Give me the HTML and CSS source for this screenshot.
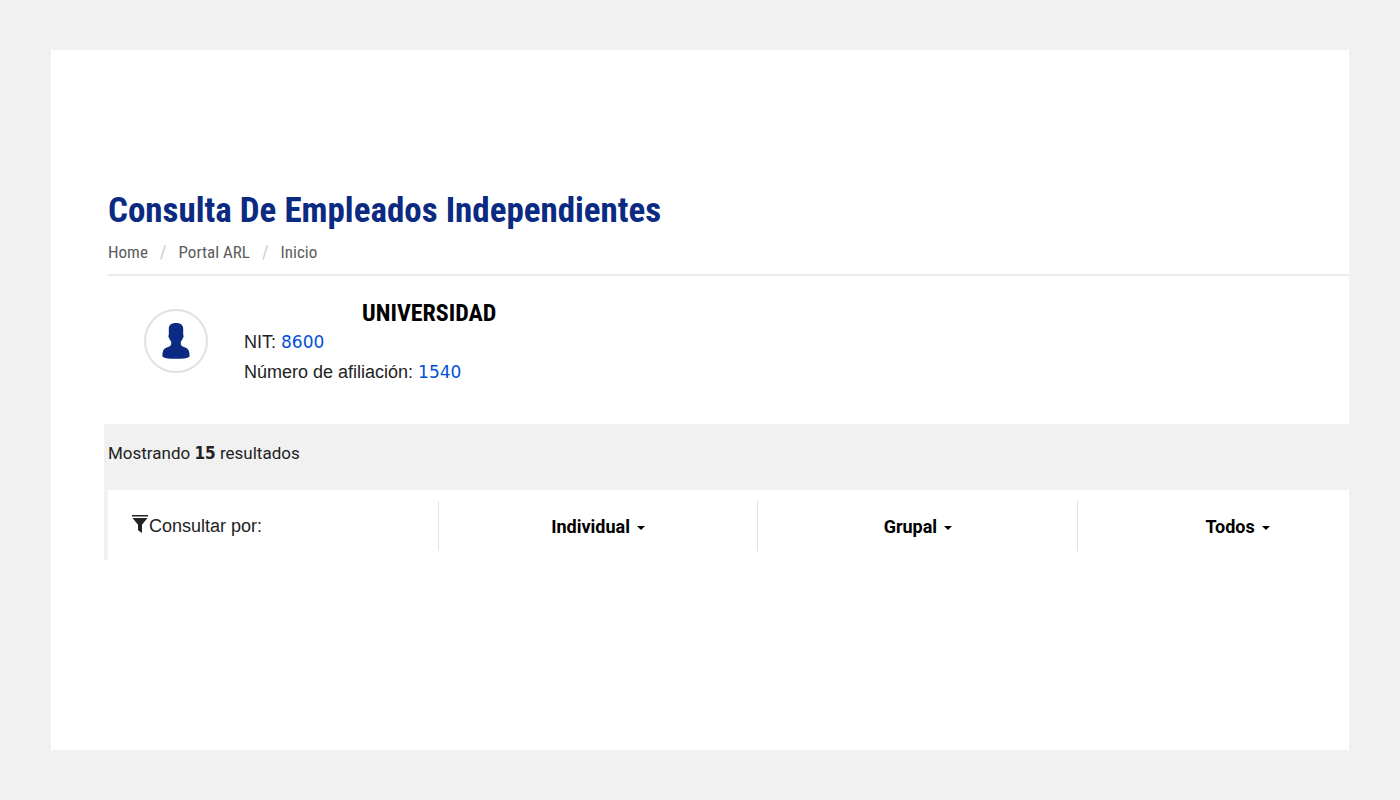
FILE: index.html
```html
<!DOCTYPE html>
<html lang="es">
<head>
<meta charset="UTF-8" />
<meta name="viewport" content="width=device-width, initial-scale=1" />
<title>Consulta De Empleados Independientes</title>
<link rel="stylesheet" href="styles.css">
</head>
<body>
<main class="page">
  <header class="page-header">
    <h1>Consulta De Empleados Independientes</h1>
    <nav>
      <ol class="breadcrumb">
        <li><a href="#">Home</a></li>
        <li><a href="#">Portal ARL</a></li>
        <li><a href="#">Inicio</a></li>
      </ol>
    </nav>
  </header>

  <section class="company">
    <div class="avatar">
      <svg viewBox="0 0 28 36" width="28" height="36">
        <path d="M14 0C9.400 0 6.800 2.200 6.800 5.500V12c-.7.600-.5 2.200.3 2.800.3 1.800 1.300 2.700 2.100 3.700v2.800c-.5 1.800-2.200 2.500-4.400 3.300C1.600 25.800.4 28 .4 33.200c0 1.600 6 2.600 13.600 2.600s13.600-1 13.600-2.600c0-5.200-1.200-7.400-4.400-8.600-2.200-.8-3.900-1.500-4.400-3.300v-2.800c.8-1 1.800-1.900 2.100-3.700.8-.6 1-2.200.3-2.800V5.500C21.200 2.200 18.600 0 14 0z" />
      </svg>
    </div>
    <div class="company-info">
      <h2>UNIVERSIDAD</h2>
      <p>NIT: <span class="number">8600</span></p>
      <p>Número de afiliación: <span class="number">1540</span></p>
    </div>
  </section>

  <section class="results">
    <p class="results-count">Mostrando <strong>15</strong> resultados</p>
    <div class="filters">
      <div class="filter-label">
        <svg viewBox="0 0 16 18" width="16" height="18">
          <path d="M0 0h16v1.500H0zM.5 3h15L10 9.800V18l-4-2.800V9.800z" />
        </svg>
        <span>Consultar por:</span>
      </div>
      <button class="filter" type="button">Individual</button>
      <button class="filter" type="button">Grupal</button>
      <button class="filter" type="button">Todos</button>
    </div>
  </section>
</main>
</body>
</html>
```
FILE: styles.css
```css
/* Reset */
* {
  margin: 0;
  padding: 0;
  box-sizing: border-box;
}

body {
  min-height: 100vh;
  display: flex;
  padding: 50px 51px;
  background: #f1f1f1;
  color: #222;
  font-family: "Liberation Sans", Arial, sans-serif;
  font-size: 18px;
  line-height: 30px;
}

.page {
  flex: 1;
  min-width: 0;
  padding: 135px 0 50px 53px;
  background: #fff;
  overflow: hidden;
}

/* Title and breadcrumb */
.page-header {
  margin-left: 4px;
  padding-bottom: 7px;
  border-bottom: 2px solid #ebebeb;
}

h1 {
  color: #0b2a82;
  font-family: "Roboto Condensed", Roboto, sans-serif;
  font-size: 35px;
  line-height: 52px;
}

.breadcrumb {
  display: flex;
  list-style: none;
  font-family: "Roboto Condensed", Roboto, sans-serif;
  font-size: 17px;
}

.breadcrumb li {
  display: flex;
}

.breadcrumb a {
  color: #5c5c5c;
  text-decoration: none;
}

.breadcrumb li + li::before {
  content: "/";
  padding: 0 12px;
  color: #ccc;
  font-size: 18px;
}

/* Company data */
.company {
  display: flex;
  gap: 36px;
  padding: 23px 0 37px 40px;
}

.avatar {
  display: flex;
  align-items: center;
  justify-content: center;
  width: 64px;
  height: 64px;
  margin-top: 10px;
  border: 2px solid #e1e1e1;
  border-radius: 50%;
}

.avatar svg {
  fill: #0b2a82;
}

h2 {
  padding-left: 118px;
  color: #000;
  font-family: "Roboto Condensed", Roboto, sans-serif;
  font-size: 24px;
  line-height: 28px;
}

.number {
  color: #0050d8;
  font-family: "DejaVu Sans", sans-serif;
  font-size: 17px;
}

/* Results */
.results {
  padding-left: 4px;
  background: #f1f1f1;
}

.results-count {
  padding: 14px 0 22px;
  font-family: Roboto, sans-serif;
  font-size: 17px;
}

.results-count strong {
  font-family: "DejaVu Sans Condensed", "DejaVu Sans", sans-serif;
}

/* The filter bar runs past the right edge of the page */
.filters {
  display: grid;
  grid-template-columns: 33fr 32fr 32fr 32fr;
  width: calc(100% + 48px);
  padding: 11px 0 9px;
  background: #fff;
}

.filter-label {
  display: flex;
  align-items: center;
  gap: 1px;
  padding-left: 24px;
}

.filter-label svg {
  margin-bottom: 4px;
  fill: #222;
}

.filter {
  display: flex;
  align-items: center;
  justify-content: center;
  gap: 7px;
  height: 50px;
  border: 0;
  border-left: 1px solid #e1e1e1;
  background: none;
  color: #000;
  font-family: Roboto, sans-serif;
  font-size: 18px;
  font-weight: 700;
  cursor: pointer;
}

.filter::after {
  content: "";
  margin-top: 3px;
  border: 4px solid transparent;
  border-top-color: #000;
  border-bottom: 0;
}
```
